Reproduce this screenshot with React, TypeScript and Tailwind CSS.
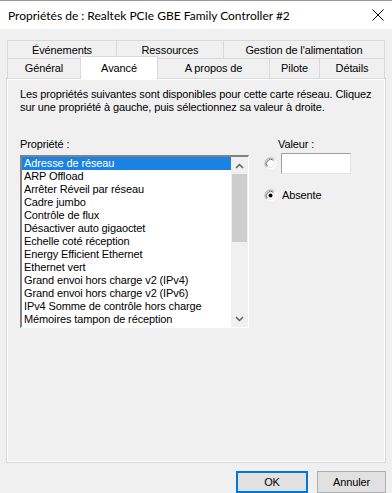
import React from "react";

const items = [
  "Adresse de réseau",
  "ARP Offload",
  "Arrêter Réveil par réseau",
  "Cadre jumbo",
  "Contrôle de flux",
  "Désactiver auto gigaoctet",
  "Echelle coté réception",
  "Energy Efficient Ethernet",
  "Ethernet vert",
  "Grand envoi hors charge v2 (IPv4)",
  "Grand envoi hors charge v2 (IPv6)",
  "IPv4 Somme de contrôle hors charge",
  "Mémoires tampon de réception",
];

function Radio({ checked }: { checked?: boolean }) {
  return (
    <svg width="13" height="13" viewBox="0 0 13 13" className="shrink-0">
      <circle cx="6.5" cy="6.5" r="5.5" fill="#ffffff" />
      <path d="M2.6 10.4 A5.5 5.5 0 0 1 10.4 2.6" fill="none" stroke="#a0a0a0" strokeWidth="1" />
      <path d="M3.4 9.6 A4.4 4.4 0 0 1 9.6 3.4" fill="none" stroke="#696969" strokeWidth="1" />
      <path d="M10.4 2.6 A5.5 5.5 0 0 1 2.6 10.4" fill="none" stroke="#ffffff" strokeWidth="1" />
      <path d="M9.6 3.4 A4.4 4.4 0 0 1 3.4 9.6" fill="none" stroke="#e3e3e3" strokeWidth="1" />
      {checked && <circle cx="6.5" cy="6.5" r="2" fill="#000000" />}
    </svg>
  );
}

export default function App() {
  const font = { fontFamily: '"Liberation Sans", Arial, sans-serif' };
  return (
    <div
      className="w-[392px] h-[493px] bg-[#f0f0f0] border-t border-[#9a9a9a] flex flex-col text-[11px] tracking-[-0.12px] text-black overflow-hidden"
      style={font}
    >
      {/* Title bar */}
      <div className="h-[28px] bg-white flex items-center justify-between pl-[8px] pr-[4px]">
        <span className="text-[12px] tracking-normal pt-[1px]" style={{ fontFamily: 'Lato, "Noto Sans", sans-serif' }}>
          Propriétés de : Realtek PCIe GBE Family Controller #2
        </span>
        <svg width="12" height="12" viewBox="0 0 12 12" className="mr-[4px]">
          <path d="M0.5 0.5 L11.5 11.5 M11.5 0.5 L0.5 11.5" stroke="#000" strokeWidth="1" fill="none" />
        </svg>
      </div>

      {/* Tabs */}
      <div className="mt-[11px] px-[7px] flex flex-col">
        <div className="flex h-[18px]">
          <div className="w-[109px] border-t border-l border-[#d9d9d9] flex items-center justify-center pt-[1px]">Événements</div>
          <div className="w-[107px] border-t border-l border-[#d9d9d9] flex items-center justify-center pt-[1px]">Ressources</div>
          <div className="w-[162px] border-t border-l border-r border-[#d9d9d9] flex items-center justify-center pt-[1px]">Gestion de l&apos;alimentation</div>
        </div>
        <div className="flex h-[20px] items-end">
          <div className="w-[73px] h-[20px] border-t border-l border-[#d9d9d9] flex items-center justify-center">Général</div>
          <div className="w-[78px] h-[23px] -mb-[1px] bg-white border-t border-l border-r border-[#d9d9d9] flex items-start justify-center pt-[3px] relative z-10">Avancé</div>
          <div className="w-[111px] h-[20px] border-t border-[#d9d9d9] flex items-center justify-center">A propos de</div>
          <div className="w-[50px] h-[20px] border-t border-l border-[#d9d9d9] flex items-center justify-center">Pilote</div>
          <div className="w-[66px] h-[20px] border-t border-l border-r border-[#d9d9d9] flex items-center justify-center">Détails</div>
        </div>
      </div>

      {/* Panel */}
      <div className="mx-[6px] h-[385px] border border-[#d9d9d9]">
        <div className="h-full border border-white flex flex-col pl-[12px]">
          <div className="mt-[8px] leading-[13px]">
            Les propriétés suivantes sont disponibles pour cette carte réseau. Cliquez
            <br />
            sur une propriété à gauche, puis sélectionnez sa valeur à droite.
          </div>

          <div className="flex mt-[24px]">
            {/* Left column */}
            <div className="flex flex-col">
              <div className="leading-[13px]">Propriété :</div>
              <div className="mt-[4px] w-[229px] h-[173px] border-t-2 border-l-2 border-t-[#828282] border-l-[#828282] border-b border-r border-b-white border-r-white flex">
                <div className="flex-1 bg-white flex flex-col leading-[13px]">
                  {items.map((it, i) => (
                    <div
                      key={it}
                      className={
                        "h-[13px] pl-[2px] whitespace-nowrap " +
                        (i === 0 ? "bg-[#1a82e2] text-white" : "")
                      }
                    >
                      {it}
                    </div>
                  ))}
                </div>
                <div className="w-[17px] bg-[#f0f0f0] flex flex-col">
                  <div className="h-[17px] flex items-center justify-center">
                    <svg width="9" height="6" viewBox="0 0 9 6">
                      <path d="M1 5 L4.5 1.5 L8 5" stroke="#606060" strokeWidth="1.5" fill="none" />
                    </svg>
                  </div>
                  <div className="mx-[1px] h-[68px] bg-[#cdcdcd]" />
                  <div className="flex-1" />
                  <div className="h-[17px] flex items-center justify-center">
                    <svg width="9" height="6" viewBox="0 0 9 6">
                      <path d="M1 1 L4.5 4.5 L8 1" stroke="#606060" strokeWidth="1.5" fill="none" />
                    </svg>
                  </div>
                </div>
              </div>
            </div>

            {/* Right column */}
            <div className="flex flex-col ml-[15px]">
              <div className="leading-[13px] pl-[14px]">Valeur :</div>
              <div className="flex items-center mt-[2px] gap-[4px]">
                <Radio />
                <div className="w-[70px] h-[21px] bg-white border-t border-l border-[#a0a0a0] border-b border-r border-b-[#e3e3e3] border-r-[#e3e3e3]" />
              </div>
              <div className="flex items-center mt-[15px] gap-[5px]">
                <Radio checked />
                <span className="leading-[13px]">Absente</span>
              </div>
            </div>
          </div>
        </div>
      </div>

      {/* Buttons */}
      <div className="flex justify-end gap-[9px] pr-[6px] mt-[8px]">
        <div className="w-[72px] h-[22px] bg-[#e1e1e1] border-2 border-[#0078d7] flex items-center justify-center">OK</div>
        <div className="w-[69px] h-[22px] bg-[#e1e1e1] border border-[#adadad] flex items-center justify-center">Annuler</div>
      </div>
    </div>
  );
}
